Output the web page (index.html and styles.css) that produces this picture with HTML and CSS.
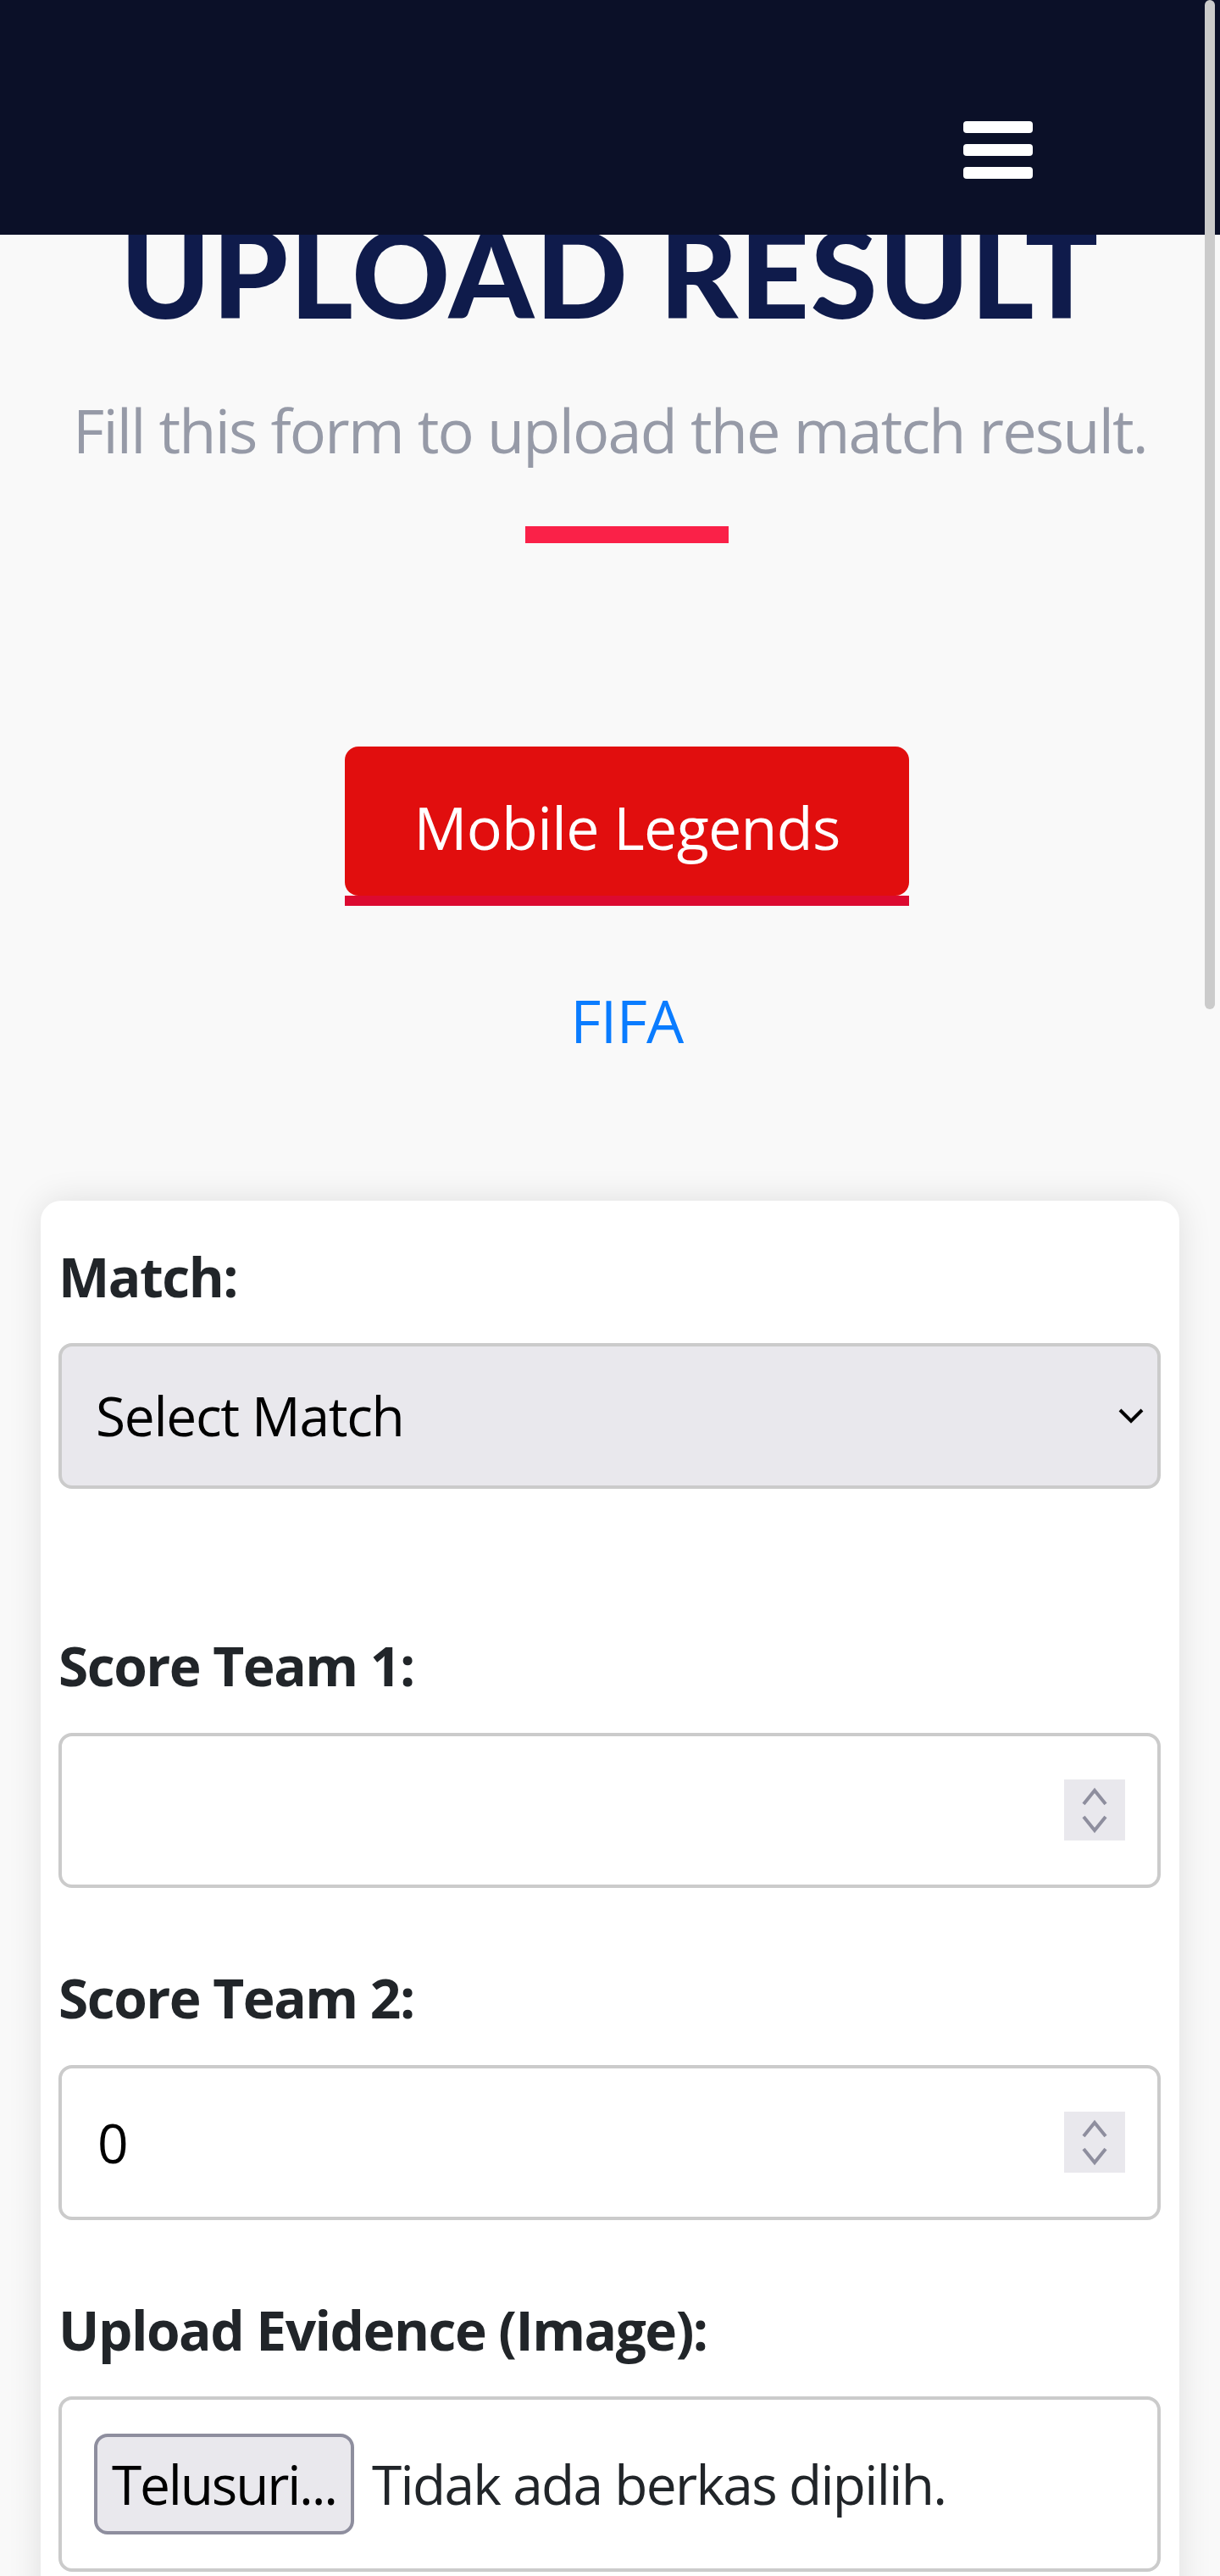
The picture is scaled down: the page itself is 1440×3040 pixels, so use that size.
FILE: index.html
```html
<!DOCTYPE html>
<html lang="id">
<head>
<meta charset="utf-8">
<title>Upload Result</title>
<link rel="stylesheet" href="styles.css">
</head>
<body>
<header class="topbar">
  <button class="menu-btn" type="button" aria-label="Menu">
    <span class="menu-bar"></span>
    <span class="menu-bar"></span>
    <span class="menu-bar"></span>
  </button>
</header>

<main class="page">
  <section class="hero">
    <h1 class="hero-title">UPLOAD RESULT</h1>
    <p class="hero-sub">Fill this form to upload the match result.</p>
  </section>

  <div class="nav-block">
    <div class="hero-rule"></div>
    <ul class="game-tabs">
      <li><a class="tab tab-active" href="#">Mobile Legends</a></li>
      <li><a class="tab" href="#">FIFA</a></li>
    </ul>
  </div>

  <form class="card">
    <div class="group group-select">
      <label class="field-label">Match:</label>
      <div class="select-box">
        <span class="select-text">Select Match</span>
        <svg class="chev" width="30" height="20" viewBox="0 0 30 20"><polyline points="2,3 15,16 28,3" fill="none" stroke="#000" stroke-width="4"/></svg>
      </div>
    </div>

    <div class="group">
      <label class="field-label">Score Team 1:</label>
      <div class="num-box">
        <span class="num-val"></span>
        <span class="spinner">
          <svg width="72" height="72" viewBox="0 0 72 72"><polyline points="23,29 36,13 49,29" fill="none" stroke="#8e8e9e" stroke-width="4"/><polyline points="23,44 36,60 49,44" fill="none" stroke="#8e8e9e" stroke-width="4"/></svg>
        </span>
      </div>
    </div>

    <div class="group">
      <label class="field-label">Score Team 2:</label>
      <div class="num-box">
        <span class="num-val">0</span>
        <span class="spinner">
          <svg width="72" height="72" viewBox="0 0 72 72"><polyline points="23,29 36,13 49,29" fill="none" stroke="#8e8e9e" stroke-width="4"/><polyline points="23,44 36,60 49,44" fill="none" stroke="#8e8e9e" stroke-width="4"/></svg>
        </span>
      </div>
    </div>

    <div class="group">
      <label class="field-label">Upload Evidence (Image):</label>
      <div class="file-box">
        <span class="file-btn">Telusuri...</span>
        <span class="file-name">Tidak ada berkas dipilih.</span>
      </div>
    </div>
  </form>
</main>

<div class="scroll-thumb"></div>
</body>
</html>
```

FILE: styles.css
```css
* { box-sizing: border-box; }

html, body {
  margin: 0;
  padding: 0;
  height: 100%;
  overflow: hidden;
}

body {
  background: #f9f9f9;
  font-family: "Open Sans", "Noto Sans", sans-serif;
  color: #212529;
}

.topbar {
  position: fixed;
  top: 0;
  left: 0;
  right: 0;
  height: 277px;
  background: #0b1028;
  display: flex;
  justify-content: flex-end;
  align-items: flex-start;
  padding: 143px 221px 0 0;
  z-index: 5;
}

.menu-btn {
  display: flex;
  flex-direction: column;
  gap: 13px;
  padding: 0;
  border: 0;
  background: transparent;
}

.menu-bar {
  display: block;
  width: 82px;
  height: 14px;
  background: #ffffff;
  border-radius: 4px;
}

.page {
  padding-top: 235px;
}

.hero {
  text-align: center;
}

.hero-title {
  margin: 0;
  font-family: Lato, "Open Sans", sans-serif;
  font-weight: 900;
  font-size: 143px;
  line-height: 1.2;
  letter-spacing: 1.8px;
  color: #0f1b4b;
}

.hero-sub {
  margin: 46px 0 0;
  font-size: 72px;
  line-height: 108px;
  letter-spacing: -1.8px;
  color: #969aa7;
}

.nav-block {
  padding-left: 40px;
}

.hero-rule {
  width: 240px;
  height: 20px;
  background: #fa2148;
  margin: 60px auto 0;
}

.game-tabs {
  list-style: none;
  margin: 240px 0 0;
  padding: 0;
  display: flex;
  flex-direction: column;
  align-items: center;
  gap: 52px;
}

.tab {
  display: block;
  position: relative;
  width: 666px;
  padding: 47px 0 33px;
  font-size: 70px;
  line-height: 96px;
  letter-spacing: -0.7px;
  text-align: center;
  text-decoration: none;
  color: #0a7cff;
  border-radius: 16px;
}

.tab-active {
  background: #e10e0e;
  color: #ffffff;
}

.tab-active::after {
  content: "";
  position: absolute;
  left: 0;
  right: 0;
  bottom: -12px;
  height: 12px;
  background: #dc0a30;
}

.card {
  margin: 132px 48px 0;
  background: #ffffff;
  border-radius: 24px;
  box-shadow: 0 0 40px rgba(0, 0, 0, 0.11);
  padding: 42px 22px 200px 21px;
}

.group {
  margin-bottom: 82px;
}

.group-select {
  margin-bottom: 161px;
}

.field-label {
  display: block;
  font-weight: 700;
  font-size: 64px;
  line-height: 96px;
  letter-spacing: -1.5px;
  color: #212529;
}

.select-box {
  margin-top: 30px;
  height: 172px;
  background: #e9e8ed;
  border: 4px solid #cbcbcb;
  border-radius: 16px;
  display: flex;
  align-items: center;
  justify-content: space-between;
  padding: 0 16px 0 40px;
  font-size: 64px;
  letter-spacing: -1.3px;
  color: #000000;
}

.num-box {
  margin-top: 31px;
  height: 183px;
  background: #ffffff;
  border: 4px solid #cbcbcb;
  border-radius: 16px;
  display: flex;
  align-items: center;
  justify-content: space-between;
  padding: 0 38px 0 42px;
  font-size: 64px;
  color: #000000;
}

.spinner {
  display: block;
  width: 72px;
  height: 72px;
  background: #e9e8ed;
}

.spinner svg {
  display: block;
}

.file-box {
  margin-top: 30px;
  border: 4px solid #cbcbcb;
  border-radius: 16px;
  display: flex;
  align-items: center;
  gap: 21px;
  padding: 40px 38px;
  font-size: 64px;
  letter-spacing: -1.7px;
}

.file-btn {
  display: flex;
  align-items: center;
  justify-content: center;
  width: 307px;
  height: 119px;
  padding: 0;
  background: #e9e8ed;
  border: 4px solid #8e8e9e;
  border-radius: 16px;
  color: #000000;
  letter-spacing: -2.2px;
  white-space: nowrap;
}

.file-name {
  color: #212529;
}

.scroll-thumb {
  position: fixed;
  top: 0;
  right: 6px;
  width: 12px;
  height: 1191px;
  background: #cbcbcb;
  border-radius: 6px;
  z-index: 10;
}
```
